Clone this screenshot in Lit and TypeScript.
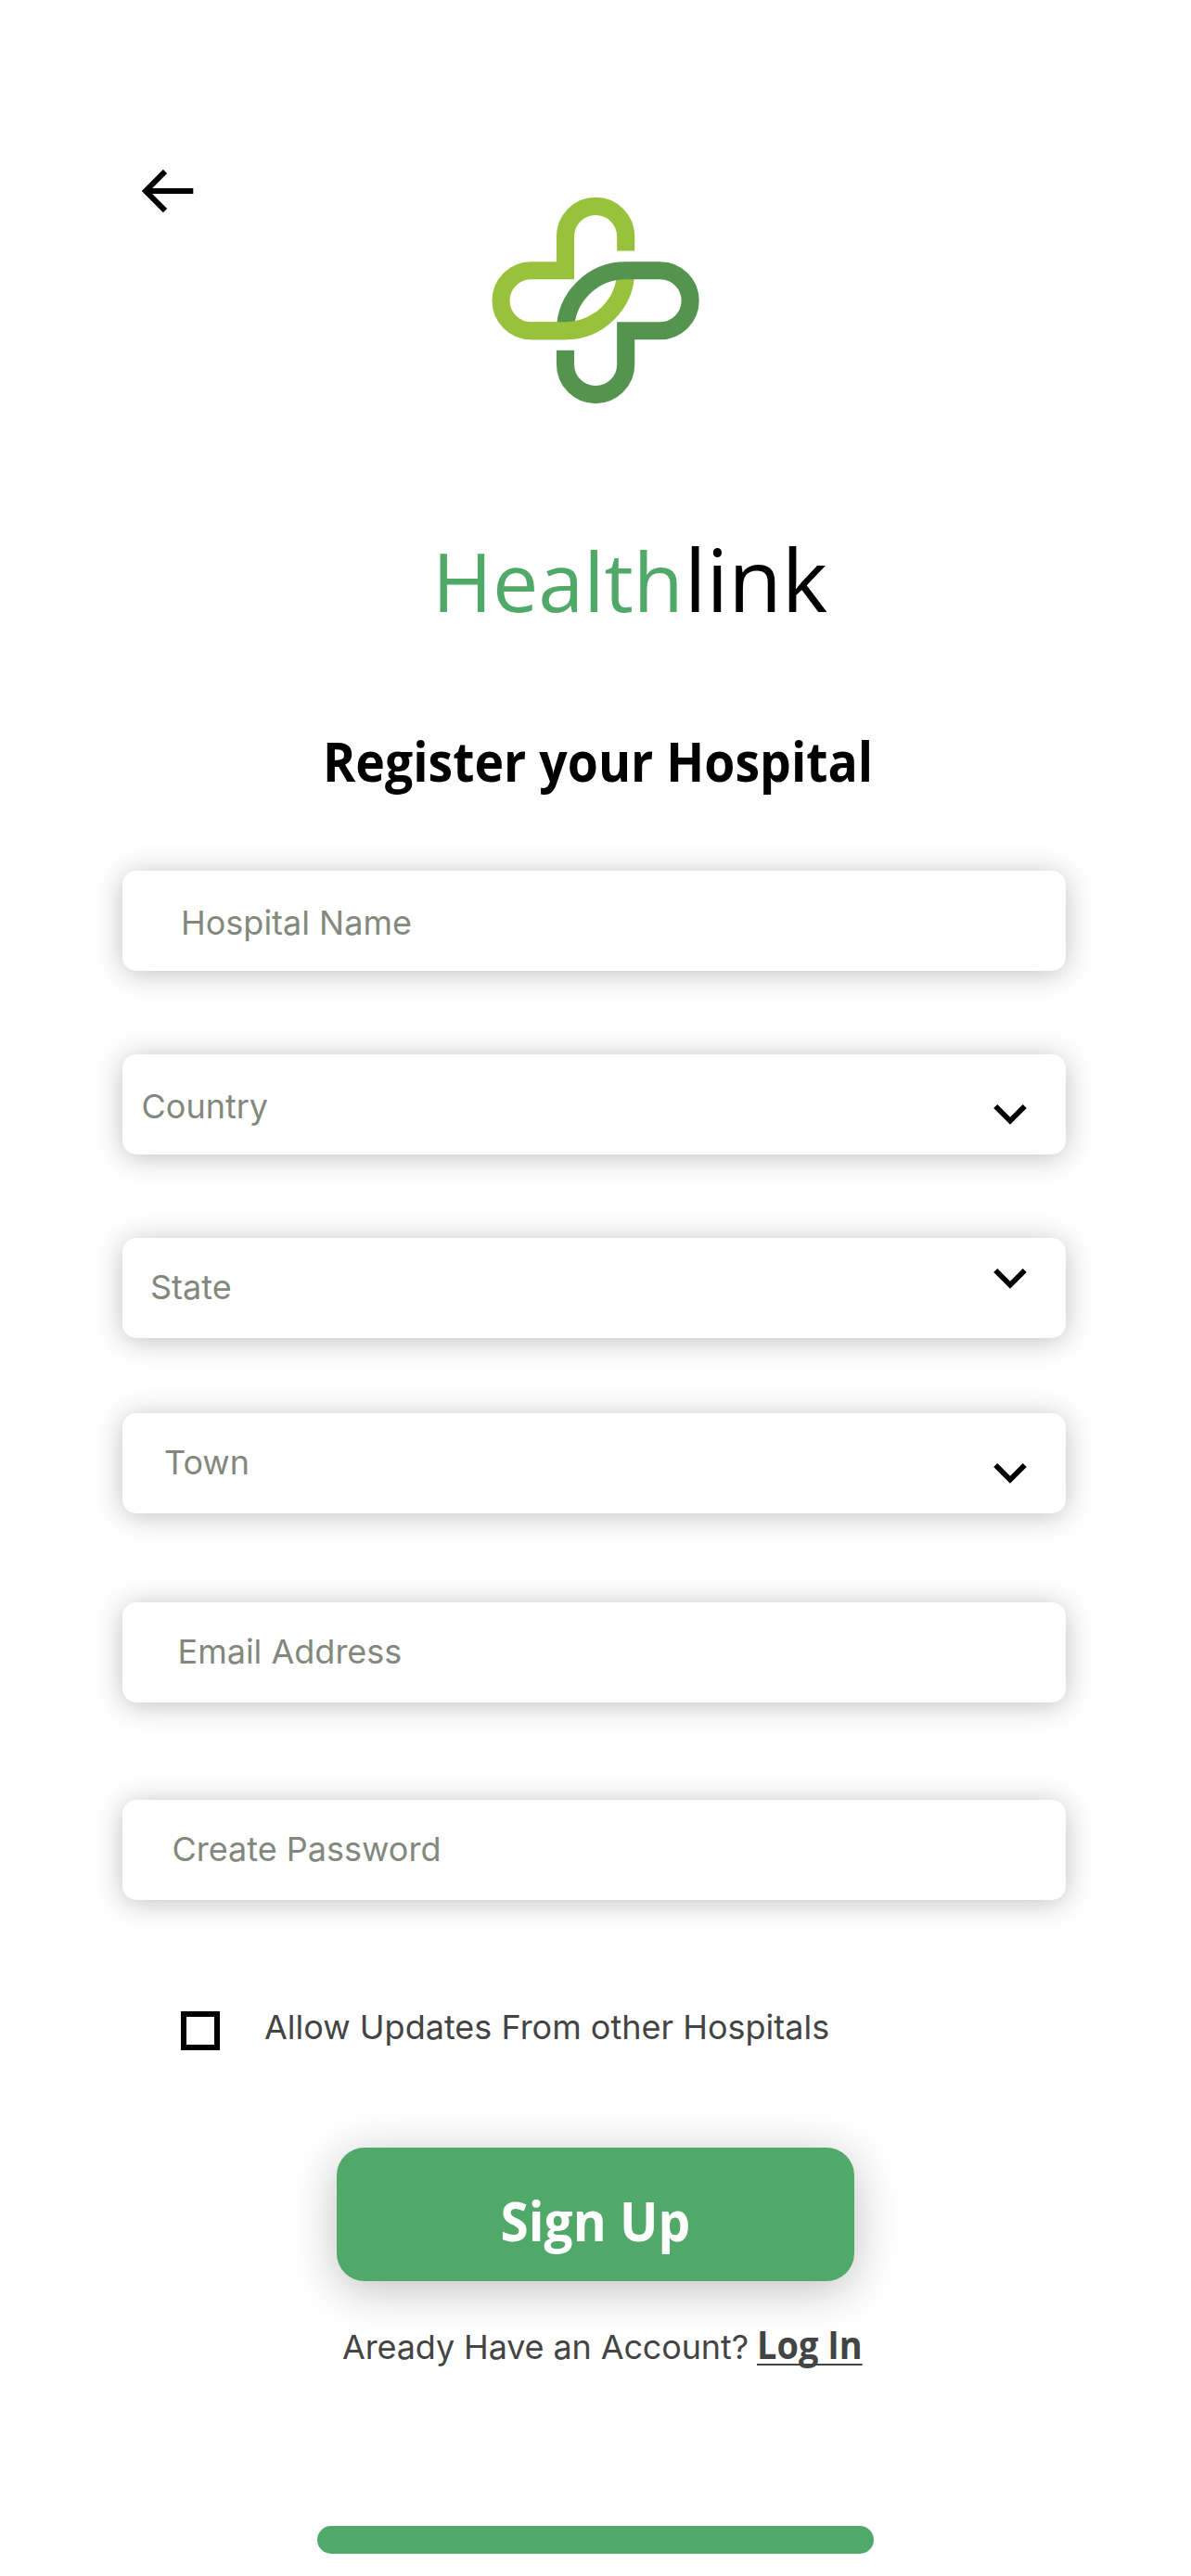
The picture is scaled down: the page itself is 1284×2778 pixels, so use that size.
import { LitElement, html, css, nothing } from "lit";
import { customElement, property } from "lit/decorators.js";

@customElement("form-field")
class FormField extends LitElement {
  @property() label = "";
  @property({ type: Boolean }) select = false;

  static styles = css`
    :host {
      display: flex;
      justify-content: space-between;
      align-items: flex-start;
      box-sizing: border-box;
      width: 1017px;
      height: 108px;
      border-radius: 15px;
      background: #fff;
      box-shadow: 0 3px 30px rgba(0, 0, 0, 0.25);
    }
    .label {
      padding: var(--label-top, 31px) 0 0 var(--label-left, 60px);
      font: 400 36px/44px Inter, sans-serif;
      color: #82897c;
      white-space: nowrap;
    }
    .chevron {
      display: block;
      flex: none;
      width: 36px;
      height: 22px;
      margin: var(--chevron-top, 54px) 42px 0 0;
    }
  `;

  render() {
    return html`
      <span class="label">${this.label}</span>
      ${this.select
        ? html`<svg class="chevron" viewBox="0 0 36 22">
            <path d="M4.3 0 18 13.7 31.7 0 35.8 4.1 18 21.7.2 4.1z" fill="#000" />
          </svg>`
        : nothing}
    `;
  }
}

@customElement("app-root")
class AppRoot extends LitElement {
  static styles = css`
    :host {
      display: block;
    }
    .page {
      box-sizing: border-box;
      display: flex;
      flex-direction: column;
      align-items: flex-start;
      width: 1284px;
      height: 2778px;
      padding-top: 160px;
      background: #fff;
      overflow: hidden;
      font-family: Inter, sans-serif;
    }
    .header {
      display: flex;
      align-items: flex-start;
      height: 300px;
      padding-left: 120px;
    }
    .back {
      display: block;
      width: 130px;
      height: 90px;
    }
    .logo {
      display: block;
      width: 280px;
      height: 270px;
      margin: 30px 0 0 250px;
    }
    .brand {
      display: flex;
      align-items: baseline;
      height: 120px;
      margin: 104px 0 0 466px;
      font-family: "Open Sans", sans-serif;
      line-height: 120px;
      white-space: nowrap;
    }
    .brand-a {
      font-size: 88px;
      color: #51a969;
    }
    .brand-b {
      margin-left: 1px;
      font-size: 94px;
      color: #000;
    }
    .title {
      margin: 96px 0 0 348px;
      font: 700 59px/80px "Open Sans", sans-serif;
      white-space: nowrap;
      color: #000;
      transform: scaleX(0.9075);
      transform-origin: left center;
    }
    .fields {
      display: flex;
      flex-direction: column;
      margin: 79px 0 0 132px;
    }
    .name {
      --label-top: 34px;
      --label-left: 63px;
    }
    .country {
      margin-top: 90px;
      --label-top: 34px;
      --label-left: 20.5px;
    }
    .state {
      margin-top: 90px;
      --label-left: 30px;
      --chevron-top: 33px;
    }
    .town {
      margin-top: 81px;
      --label-left: 45px;
    }
    .email {
      margin-top: 96px;
      --label-left: 59.5px;
    }
    .password {
      margin-top: 105px;
      --label-left: 53.5px;
    }
    .consent {
      display: flex;
      align-items: flex-start;
      height: 47px;
      margin: 115px 0 0 195px;
      font-size: 36px;
      line-height: 44px;
      color: #444;
      white-space: nowrap;
    }
    .box {
      box-sizing: border-box;
      width: 42px;
      height: 42px;
      margin: 5px 48px 0 0;
      border: 6px solid #000;
    }
    .submit {
      box-sizing: border-box;
      width: 558px;
      height: 144px;
      margin: 105px 0 0 363px;
      padding: 12px 0 0;
      border: 0;
      border-radius: 30px;
      background: #51a969;
      box-shadow: 0 9px 50px rgba(0, 0, 0, 0.25);
      color: #fff;
      font: 700 59px/80px "Open Sans", sans-serif;
      text-align: center;
    }
    .submit-label {
      display: inline-block;
      transform: scaleX(0.931);
    }
    .login {
      display: flex;
      align-items: baseline;
      height: 60px;
      margin: 38px 0 0 369px;
      font-size: 36px;
      line-height: 60px;
      color: #444;
      white-space: nowrap;
    }
    .question {
      letter-spacing: -0.13px;
    }
    .link {
      margin-left: 9px;
      font-family: "Open Sans", sans-serif;
      font-size: 41px;
      font-weight: 700;
      color: #444;
      text-decoration: underline;
      text-decoration-thickness: 2px;
      text-decoration-skip-ink: none;
      text-underline-offset: 5px;
      transform: scaleX(0.925);
      transform-origin: left center;
    }
    .indicator {
      width: 600px;
      height: 30px;
      margin: 166px 0 0 342px;
      border-radius: 15px;
      background: #51a969;
    }
  `;

  render() {
    return html`
      <div class="page">
        <div class="header">
          <svg class="back" viewBox="0 0 130 90" fill="none" stroke="#000" stroke-width="6">
            <path d="M88.3 46H38" />
            <path d="M58 24.8 37 46l21 21.2" />
          </svg>
          <svg class="logo" viewBox="0 0 280 270" fill="none" stroke-width="19.1">
            <path
              stroke="#98c23c"
              d="M174.7 80.6V65a32.6 32.6 0 0 0-65.2 0v36.8H72.5a32.4 32.4 0 0 0 0 64.9h37a65.2 65 0 0 0 65.2-64.9"
            />
            <path
              stroke="#55944e"
              d="M109.5 187.8V203a32.6 32.6 0 0 0 65.2 0v-36.3h37a32.4 32.4 0 0 0 0-64.9h-37a65.2 65 0 0 0-65.2 64.9"
            />
            <path stroke="#98c23c" d="M72.5 166.7h37a65.2 65 0 0 0 37-11.6" />
          </svg>
        </div>
        <div class="brand"><span class="brand-a">Health</span><span class="brand-b">link</span></div>
        <div class="title">Register your Hospital</div>
        <div class="fields">
          <form-field class="name" label="Hospital Name"></form-field>
          <form-field class="country" label="Country" select></form-field>
          <form-field class="state" label="State" select></form-field>
          <form-field class="town" label="Town" select></form-field>
          <form-field class="email" label="Email Address"></form-field>
          <form-field class="password" label="Create Password"></form-field>
        </div>
        <div class="consent">
          <span class="box"></span>
          <span>Allow Updates From other Hospitals</span>
        </div>
        <button class="submit"><span class="submit-label">Sign Up</span></button>
        <div class="login">
          <span class="question">Aready Have an Account?</span>
          <a class="link">Log In</a>
        </div>
        <div class="indicator"></div>
      </div>
    `;
  }
}
